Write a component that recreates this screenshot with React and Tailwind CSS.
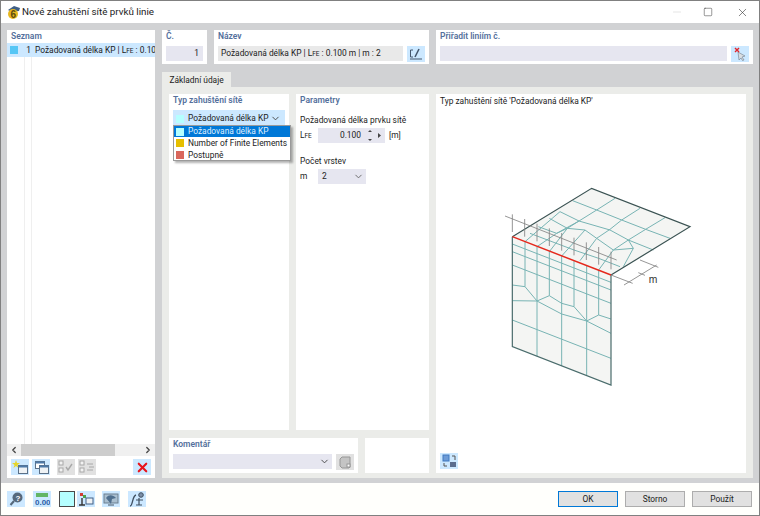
import React from 'react';
import { ChevronDown, ChevronLeft, ChevronRight, Minus, Square, X } from 'lucide-react';

const heading = 'text-[#54709c] font-semibold text-[8.5px] leading-[13px]';

function Logo() {
  return (
    <svg width="14" height="15" viewBox="0 0 14 15">
      <path d="M1 5 L7 1 L13 3 L12 6 L5 7 Z" fill="#3f5f86" />
      <circle cx="6" cy="9" r="5" fill="#e8b820" />
      <text x="3.5" y="13" fontSize="10" fontWeight="700" fill="#5b4a10" fontFamily="Liberation Sans">6</text>
    </svg>
  );
}

function IconBtn({ children, tone = 'bg-[#cce8ff]', className = '' }) {
  return <div className={`w-[18px] h-[16px] flex items-center justify-center ${tone} ${className}`}>{children}</div>;
}

function WindowsIcon({ star }) {
  return (
    <svg width="16" height="14" viewBox="0 0 16 14">
      {star && <path d="M4 0 L5 3 L8 3 L5.5 5 L6.5 8 L4 6 L1.5 8 L2.5 5 L0 3 L3 3 Z" fill="#e6d52a" />}
      {!star && <g><rect x="2.5" y="1.5" width="9" height="7" fill="#fff" stroke="#5a7088" /><rect x="2.5" y="1.5" width="9" height="2" fill="#4d79a8" /></g>}
      <rect x="6.5" y="5.5" width="9" height="8" fill="#eef2f5" stroke="#5a7088" />
      <rect x="6.5" y="5.5" width="9" height="2" fill="#4d79a8" />
    </svg>
  );
}

function CheckIcon({ alt }) {
  return (
    <svg width="16" height="14" viewBox="0 0 16 14" fill="none" stroke="#a8a8a8" strokeWidth="1">
      <rect x="1" y="1" width="4" height="4" fill="#f2f2f2" />
      <rect x="1" y="8" width="4" height="4" fill="#f2f2f2" />
      {alt ? <path d="M8 4 h6 M8 10 h6 M10 7 h5" /> : <path d="M8 7 l2 3 l4 -6" strokeWidth="1.4" />}
    </svg>
  );
}

function MeshDrawing() {
  const mesh = [
    // svisla stena
    'M97 222 L393 337', 'M97 245 L393 360', 'M97 285 L393 400',
    'M97 345 L135 350 L171 393 L208 377 L245 400 L282 410 L320 453 L356 435 L393 447',
    'M97 392 L171 393 L245 432 L320 453 L393 490', 'M97 450 L393 565',
    'M135 215 L135 350', 'M171 230 L171 559', 'M208 245 L208 377', 'M245 258 L245 588',
    'M282 272 L282 410', 'M320 287 L320 617', 'M356 300 L356 435',
    // horni plocha
    'M278 92 L350 120 L425 150 L497 178 L570 205', 'M405 85 L350 120 L297 153 L262 175 L208 245',
    'M480 115 L425 150 L390 178 L350 205 L300 272', 'M555 143 L497 178 L445 210 L400 240 L356 300',
    'M240 125 L297 153 L390 180 L445 210 L520 240', 'M208 145 L262 175 L315 180 L350 205 L400 240 L460 235',
    'M175 170 L230 190 L262 175', 'M135 215 L240 125', 'M171 230 L230 190 L297 153', 'M245 258 L315 180',
    'M445 210 L460 235 L430 290', 'M150 190 L208 212 L282 240 L356 265 L420 290',
  ];
  return (
    <svg width="220" height="220" viewBox="0 0 660 660" className="shrink-0">
      <path d="M97 200 L335 55 L630 170 L393 315 L393 645 L97 530 Z" fill="#f4f5f3" />
      <g fill="none" stroke="#78b4b4" strokeWidth="3">
        {mesh.map((d) => <path key={d} d={d} />)}
      </g>
      <path d="M97 200 L335 55 L630 170 L393 315" fill="none" stroke="#3a5252" strokeWidth="3.6" />
      <path d="M97 200 L97 530 L393 645 L393 315" fill="none" stroke="#4a6c6c" strokeWidth="3.6" />
      <g fill="none" stroke="#858585" strokeWidth="2.6">
        <path d="M75 138 L410 270" />
        {[97, 134, 171, 208, 245, 282, 319, 356, 393].map((x, i) => (
          <path key={x} d={`M${x} ${133 + i * 14} L${x} ${186 + i * 14}`} />
        ))}
        <path d="M393 315 L458 340 M480 270 L535 292 M432 345 L530 285 M475 308 L495 316" />
      </g>
      <path d="M97 200 L393 315" stroke="#e5281c" strokeWidth="4.4" />
      <text x="506" y="340" fontSize="31" fill="#333" fontFamily="Liberation Sans">m</text>
    </svg>
  );
}

export default function App() {
  return (
    <div className="w-[760px] h-[516px] flex flex-col border border-[#808080] bg-[#fffffc] text-[#1c1c1c] text-[8.4px] font-['Roboto',sans-serif] overflow-hidden relative">
      {/* Title bar */}
      <div className="h-[22px] shrink-0 flex items-center pl-[6px] bg-white">
        <Logo />
        <span className="ml-[1px] text-[9.8px] text-[#222]">Nové zahuštění sítě prvků linie</span>
        <div className="ml-auto flex items-center text-[#333]">
          <Minus size={12} strokeWidth={1} className="text-[#c8c8c8] mr-[20px]" />
          <Square size={10} strokeWidth={1.2} className="mr-[23px]" />
          <X size={13} strokeWidth={1.1} className="mr-[10px]" />
        </div>
      </div>

      {/* Body */}
      <div className="h-[460px] shrink-0 bg-[#d1d2d4] flex gap-[7px] pl-[6px] pr-[6px] pt-[7px] pb-[5px]">
        {/* Seznam */}
        <div className="w-[148px] bg-white flex flex-col">
          <div className={`${heading} pl-[4px] h-[13px]`}>Seznam</div>
          <div className="h-[14px] bg-[#cce8ff] flex items-center whitespace-nowrap overflow-hidden">
            <span className="w-[8px] h-[8px] ml-[3px] bg-[#55c6f5] shrink-0" />
            <span className="w-[13px] text-right shrink-0">1</span>
            <span className="ml-[4px]">Požadovaná délka KP | L<span className="text-[6.5px]">FE</span> : 0.10</span>
          </div>
          <div className="flex-1 flex pl-[17px]">
            <div className="w-[8px] border-l border-r border-[#efefef]" />
          </div>
          <div className="h-[12px] bg-[#f0f0f0] flex items-center text-[#444]">
            <div className="w-[14px] flex justify-center"><ChevronLeft size={10} strokeWidth={3} /></div>
            <div className="w-[94px] h-full bg-[#cdcdcd]" />
            <div className="ml-auto w-[14px] flex justify-center"><ChevronRight size={10} strokeWidth={3} /></div>
          </div>
          <div className="h-[22px] flex items-center gap-[3px] px-[4px]">
            <IconBtn><WindowsIcon star /></IconBtn>
            <IconBtn><WindowsIcon /></IconBtn>
            <IconBtn tone="bg-[#e1e1e1]" className="ml-[4px]"><CheckIcon /></IconBtn>
            <IconBtn tone="bg-[#e1e1e1]"><CheckIcon alt /></IconBtn>
            <IconBtn className="ml-auto"><X size={15} strokeWidth={3.4} className="text-[#e8141c]" /></IconBtn>
          </div>
        </div>

        {/* Right part */}
        <div className="flex-1 flex flex-col min-w-0">
          <div className="h-[34px] flex gap-[7px]">
            <div className="w-[45px] bg-white px-[4px]">
              <div className={`${heading} h-[16px]`}>Č.</div>
              <div className="h-[15px] bg-[#e6e6f0] text-right pr-[4px] leading-[15px]">1</div>
            </div>
            <div className="w-[215px] bg-white px-[4px]">
              <div className={`${heading} h-[16px]`}>Název</div>
              <div className="flex gap-[4px]">
                <div className="flex-1 h-[15px] bg-[#e9e9e9] pl-[3px] leading-[15px] whitespace-nowrap overflow-hidden">Požadovaná délka KP | L<span className="text-[6.5px]">FE</span> : 0.100 m | m : 2</div>
                <IconBtn className="h-[15px]">
                  <svg width="14" height="12" viewBox="0 0 14 12" fill="none" stroke="#44566c"><path d="M4 2 H1.5 V9 H4 M1 11 H13" /><path d="M6 9 L10 1" strokeWidth="1.6" /></svg>
                </IconBtn>
              </div>
            </div>
            <div className="flex-1 bg-white px-[4px]">
              <div className={`${heading} h-[16px]`}>Přiřadit liniím č.</div>
              <div className="flex gap-[4px]">
                <div className="flex-1 h-[15px] bg-[#e6e6f0]" />
                <IconBtn className="h-[15px]">
                  <svg width="14" height="14" viewBox="0 0 14 14"><path d="M5 5 L12 9 L9 10 L11 13 L9.5 13.5 L8 11 L6 13 Z" fill="#d8dde2" stroke="#7c8a96" strokeWidth="0.7" /><path d="M2 1 L6 5 M6 1 L2 5" stroke="#e0242a" strokeWidth="1.4" /></svg>
                </IconBtn>
              </div>
            </div>
          </div>

          <div className="h-[23px] flex items-end pt-[8px]">
            <div className="w-[69px] h-[15px] bg-[#ebece9] text-center leading-[16px]">Základní údaje</div>
          </div>

          {/* Tab panel */}
          <div className="flex-1 bg-[#ebece9] flex gap-[7px] p-[7px] pb-[5px] min-h-0">
            <div className="w-[260px] flex flex-col gap-[8px]">
              <div className="flex-1 flex gap-[7px]">
                <div className="w-[120px] bg-white px-[4px] relative">
                  <div className={`${heading} h-[16px]`}>Typ zahuštění sítě</div>
                  <div className="h-[17px] bg-[#cce8ff] flex items-center pl-[3px] pr-[4px] whitespace-nowrap">
                    <span className="w-[8px] h-[8px] bg-[#b5ffff] shrink-0" />
                    <span className="ml-[4px]">Požadovaná délka KP</span>
                    <ChevronDown size={11} className="ml-auto text-[#444]" />
                  </div>
                  {/* Otevreny seznam */}
                  <div className="absolute left-[4px] top-[31px] w-[118px] h-[36px] bg-white border border-[#9a9a9a] shadow-[2px_2px_2px_rgba(0,0,0,0.3)] z-10">
                    <div className="h-[11px] bg-[#0078d7] text-[#dfefff] flex items-center pl-[2px] whitespace-nowrap">
                      <span className="w-[8px] h-[8px] bg-[#b5ffff] shrink-0" /><span className="ml-[4px]">Požadovaná délka KP</span>
                    </div>
                    <div className="h-[12px] flex items-center pl-[2px] whitespace-nowrap">
                      <span className="w-[8px] h-[8px] bg-[#e6bf00] shrink-0" /><span className="ml-[4px]">Number of Finite Elements</span>
                    </div>
                    <div className="h-[12px] flex items-center pl-[2px] whitespace-nowrap">
                      <span className="w-[8px] h-[8px] bg-[#d9675c] shrink-0" /><span className="ml-[4px]">Postupně</span>
                    </div>
                  </div>
                </div>
                <div className="w-[133px] bg-white px-[4px]">
                  <div className={`${heading} h-[19px]`}>Parametry</div>
                  <div className="h-[14px] leading-[14px]">Požadovaná délka prvku sítě</div>
                  <div className="flex items-center h-[15px] mt-[1px]">
                    <span className="w-[18px]">L<span className="text-[6.5px]">FE</span></span>
                    <div className="w-[67px] h-[15px] bg-[#e6e6f0] flex items-center justify-end pr-[2px]">
                      <span>0.100</span>
                      <svg width="20" height="13" viewBox="0 0 20 13" className="ml-[2px]" fill="#444"><path d="M5 3 L7 1 L9 3 Z M5 10 L7 12 L9 10 Z M15 4 L18 6.5 L15 9 Z" /></svg>
                    </div>
                    <span className="ml-[4px]">[m]</span>
                  </div>
                  <div className="h-[14px] leading-[14px] mt-[11px]">Počet vrstev</div>
                  <div className="flex items-center h-[15px] mt-[1px]">
                    <span className="w-[18px]">m</span>
                    <div className="w-[48px] h-[15px] bg-[#e6e6f0] flex items-center pl-[4px] pr-[2px]">
                      <span>2</span>
                      <ChevronDown size={11} className="ml-auto text-[#666]" />
                    </div>
                  </div>
                </div>
              </div>
              <div className="h-[35px] flex gap-[7px]">
                <div className="w-[189px] bg-white px-[4px]">
                  <div className={`${heading} h-[16px]`}>Komentář</div>
                  <div className="flex gap-[4px]">
                    <div className="flex-1 h-[15px] bg-[#e6e6f0] flex items-center justify-end pr-[2px]"><ChevronDown size={11} className="text-[#444]" /></div>
                    <IconBtn tone="bg-[#e1e1e1]" className="h-[15px]">
                      <svg width="13" height="13" viewBox="0 0 13 13" fill="#c4c4c4" stroke="#969696"><path d="M1 3 L3 1 H11 V11 L10 12 H3 L1 10 Z" /><rect x="8" y="8" width="3" height="3" fill="#fff" /></svg>
                    </IconBtn>
                  </div>
                </div>
                <div className="w-[64px] bg-white" />
              </div>
            </div>

            <div className="flex-1 bg-white flex flex-col px-[4px] min-w-0">
              <div className="h-[16px] leading-[15px]">Typ zahuštění sítě 'Požadovaná délka KP'</div>
              <div className="flex-1 flex items-start pl-[40px] pt-[60px] min-h-0"><MeshDrawing /></div>
              <IconBtn className="h-[16px] mb-[4px]">
                <svg width="15" height="14" viewBox="0 0 15 14"><rect x="1" y="1" width="6" height="6" fill="#6d9bd6" stroke="#3f78c0" /><rect x="8" y="8" width="6" height="5" fill="#5b6d8e" /><path d="M10 2 h3 v4 M5 12 h-3 v-3" fill="none" stroke="#555" /></svg>
              </IconBtn>
            </div>
          </div>
        </div>
      </div>

      {/* Bottom bar */}
      <div className="flex-1 flex items-center pl-[6px] pr-[7px] bg-[#fffffc]">
        <IconBtn>
          <svg width="15" height="14" viewBox="0 0 15 14"><circle cx="8.5" cy="5.5" r="5" fill="#56697c" /><path d="M5 9 L1.5 13" stroke="#56697c" strokeWidth="2" /><text x="6.5" y="8.5" fontSize="8" fontWeight="700" fill="#fff" fontFamily="Liberation Sans">?</text></svg>
        </IconBtn>
        <IconBtn className="ml-[8px]">
          <svg width="16" height="15" viewBox="0 0 16 15"><rect x="2" y="1" width="12" height="4" fill="#63b565" /><text x="1" y="12.5" fontSize="8" fontWeight="700" fill="#2b5ea8" fontFamily="Liberation Sans">0.00</text></svg>
        </IconBtn>
        <div className="ml-[8px] w-[16px] h-[16px] bg-[#b5ffff] border border-[#4a4a4a]" />
        <IconBtn className="ml-[2px]">
          <svg width="16" height="15" viewBox="0 0 16 15"><rect x="2" y="1" width="3" height="3" fill="#d23c32" /><rect x="5" y="3" width="3" height="3" fill="#4ca24c" /><path d="M4 6 V13 M1 13 H7" stroke="#333" strokeWidth="1.4" /><rect x="8" y="6" width="7" height="6" fill="#eef2f5" stroke="#3f5f86" /></svg>
        </IconBtn>
        <IconBtn className="ml-[7px]">
          <svg width="16" height="15" viewBox="0 0 16 15"><rect x="1" y="2" width="14" height="9" fill="#a9bfd0" stroke="#6b7f90" /><path d="M3 6 C6 2 10 3 13 6 L9 7 L8 12 Z" fill="#4f6f8e" /><path d="M5 13 H11" stroke="#6b7f90" strokeWidth="1.4" /></svg>
        </IconBtn>
        <IconBtn className="ml-[8px]">
          <svg width="16" height="15" viewBox="0 0 16 15" fill="none" stroke="#3f4f60"><path d="M1 14 C4 14 3 4 7 3" strokeWidth="1.3" /><path d="M7 8 H14 M10 6 V13 M7 13 H13" strokeWidth="1.2" /><circle cx="12" cy="3" r="2.3" fill="#7c8fa8" /></svg>
        </IconBtn>
        <div className="ml-auto flex gap-[7px] text-[#222]">
          <button className="w-[60px] h-[16px] bg-[#e1e1e1] border border-[#0078d7] leading-[13px]">OK</button>
          <button className="w-[60px] h-[16px] bg-[#e1e1e1] border border-[#adadad] leading-[13px]">Storno</button>
          <button className="w-[60px] h-[16px] bg-[#e1e1e1] border border-[#adadad] leading-[13px]">Použít</button>
        </div>
      </div>
    </div>
  );
}
